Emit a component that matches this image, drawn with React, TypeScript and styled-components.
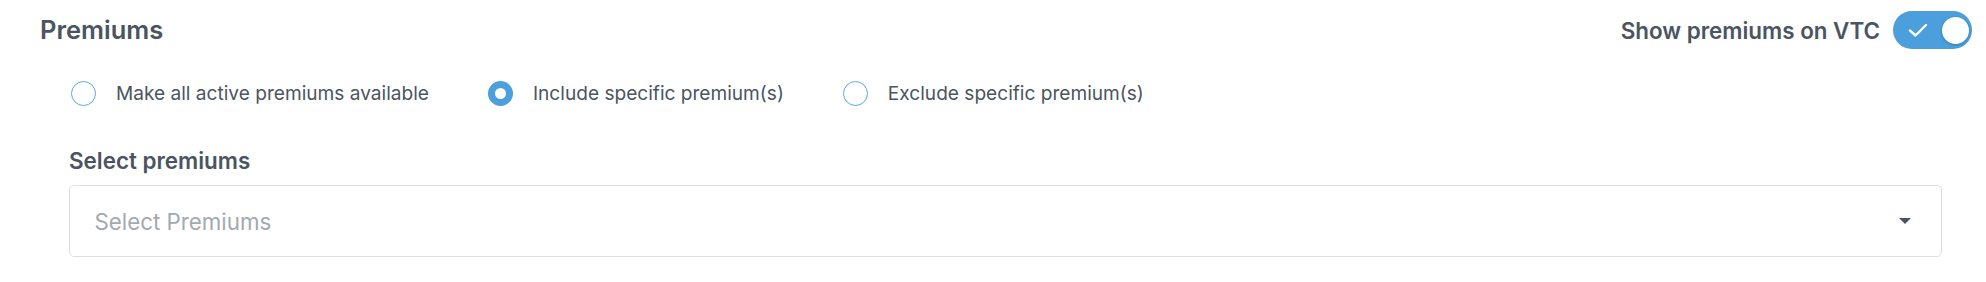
import React from "react";
import styled, { createGlobalStyle } from "styled-components";

const GlobalStyle = createGlobalStyle`
  html, body { margin: 0; padding: 0; background: #ffffff; }
  body { font-family: Inter, "Noto Sans", sans-serif; color: #4a5561; }
  * { box-sizing: border-box; }
`;

const Section = styled.section`
  padding: 11px 14px 0 40px;
  width: 1986px;
`;

const Header = styled.div`
  display: flex;
  align-items: center;
  justify-content: space-between;
  height: 38px;
`;

const Title = styled.h2`
  margin: 0;
  font-size: 25.5px;
  line-height: 32px;
  font-weight: 600;
  color: #4a5561;
`;

const ToggleGroup = styled.label`
  display: flex;
  align-items: center;
  gap: 13px;
  font-size: 22.4px;
  font-weight: 600;
  color: #4a5561;
`;

const Track = styled.span<{ $on: boolean }>`
  position: relative;
  display: inline-flex;
  align-items: center;
  width: 79px;
  height: 38px;
  border-radius: 19px;
  background: ${(p) => (p.$on ? "#4a9fdc" : "#c9cfd5")};
  padding-left: 15px;
`;

const Knob = styled.span`
  position: absolute;
  right: 3px;
  top: 6px;
  width: 27px;
  height: 27px;
  border-radius: 50%;
  background: #ffffff;
  box-shadow: 0 1px 3px rgba(0, 0, 0, 0.25);
`;

const Body = styled.div`
  padding: 0 30px 0 29px;
`;

const RadioRow = styled.div`
  display: flex;
  align-items: center;
  margin-top: 32px;
  padding-left: 2px;
  height: 25px;
`;

const RadioOption = styled.label`
  display: flex;
  align-items: center;
  gap: 20px;
  font-size: 19.1px;
  line-height: 23px;
  color: #4a5561;
  margin-right: 59px;
`;

const RadioCircle = styled.span<{ $checked: boolean }>`
  width: 25px;
  height: 25px;
  border-radius: 50%;
  border: ${(p) => (p.$checked ? "7px solid #4a9fdc" : "1.5px solid #5aaae4")};
  background: #fff;
  flex: none;
`;

const FieldLabel = styled.div`
  margin-top: 41px;
  font-size: 22.4px;
  line-height: 28px;
  font-weight: 600;
  color: #4a5561;
`;

const Select = styled.div`
  margin-top: 10px;
  height: 72px;
  border: 1.5px solid #dcdfe2;
  border-radius: 5px;
  display: flex;
  align-items: center;
  justify-content: space-between;
  padding: 0 30px 0 24.5px;
  background: #fff;
`;

const Placeholder = styled.span`
  font-size: 22.3px;
  color: #a3a9b0;
`;

const Caret = styled.span`
  width: 0;
  height: 0;
  border-left: 6.5px solid transparent;
  border-right: 6.5px solid transparent;
  border-top: 6px solid #4a5561;
`;

const options = [
  { label: "Make all active premiums available", checked: false },
  { label: "Include specific premium(s)", checked: true },
  { label: "Exclude specific premium(s)", checked: false },
];

export default function App() {
  return (
    <>
      <GlobalStyle />
      <Section>
        <Header>
          <Title>Premiums</Title>
          <ToggleGroup>
            Show premiums on VTC
            <Track $on>
              <svg width="20" height="14" viewBox="0 0 20 14" fill="none">
                <path d="M2 7.5l5.5 5L18 2" stroke="#fff" strokeWidth="2.4" strokeLinecap="round" strokeLinejoin="round" />
              </svg>
              <Knob />
            </Track>
          </ToggleGroup>
        </Header>
        <Body>
          <RadioRow>
            {options.map((o) => (
              <RadioOption key={o.label}>
                <RadioCircle $checked={o.checked} />
                {o.label}
              </RadioOption>
            ))}
          </RadioRow>
          <FieldLabel>Select premiums</FieldLabel>
          <Select>
            <Placeholder>Select Premiums</Placeholder>
            <Caret />
          </Select>
        </Body>
      </Section>
    </>
  );
}
